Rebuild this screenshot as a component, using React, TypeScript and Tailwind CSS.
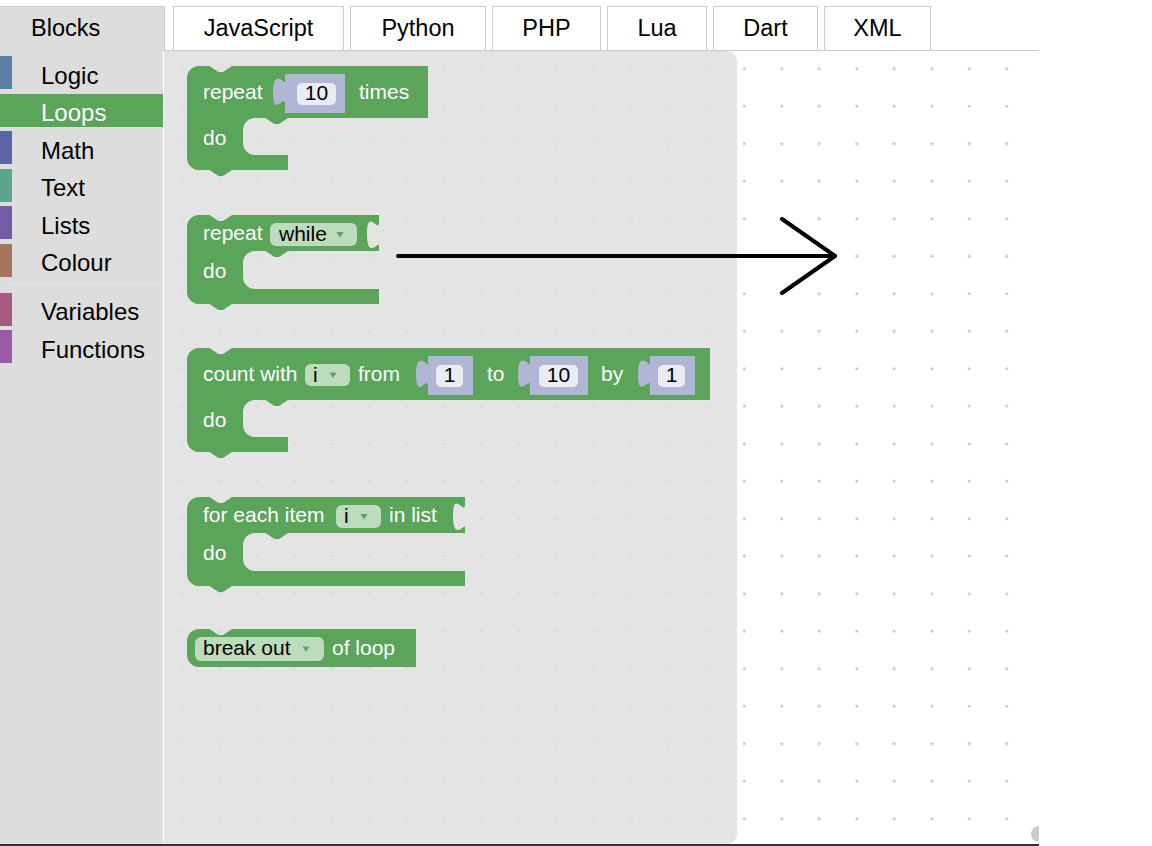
import React from 'react';

const FONT = "'Liberation Sans', Arial, sans-serif";
const GREEN = '#5ba55b';
const SHADOW = '#b1b6d4';
const FIELD = '#e9ebf5';
const DROP = '#bddbbd';

const tabs = [
  { label: 'JavaScript', cls: 'w-[171px]' },
  { label: 'Python', cls: 'w-[136px]' },
  { label: 'PHP', cls: 'w-[109px]' },
  { label: 'Lua', cls: 'w-[100px]' },
  { label: 'Dart', cls: 'w-[105px]' },
  { label: 'XML', cls: 'w-[107px]' },
];

const topCats = [
  { label: 'Logic', bar: 'bg-[#5b80a5]' },
  { label: 'Loops', bar: 'bg-[#5ba55b]', selected: true },
  { label: 'Math', bar: 'bg-[#5b67a5]' },
  { label: 'Text', bar: 'bg-[#5ba58c]' },
  { label: 'Lists', bar: 'bg-[#745ba5]' },
  { label: 'Colour', bar: 'bg-[#a5745b]' },
];

const bottomCats = [
  { label: 'Variables', bar: 'bg-[#a55b80]' },
  { label: 'Functions', bar: 'bg-[#995ba6]' },
];

type Cat = { label: string; bar: string; selected?: boolean };

function CategoryRow({ cat }: { cat: Cat }) {
  return (
    <div className={`flex h-[33px] items-center ${cat.selected ? 'bg-[#5ba55b] text-white' : 'text-black'}`}>
      <div className={`h-full w-[12px] ${cat.bar}`} />
      <span className="ml-[29px] mt-[6px] text-[24px] leading-none">{cat.label}</span>
    </div>
  );
}

// ---- block shapes (page coordinates) ----
const NOTCH_R = 'l9,6 4.5,0 9,-6';
const NOTCH_L = 'l-9,6 -4.5,0 -9,-6';
const TAB_DOWN = 'c0,11.25 -12,-15 -12,11.25 s12,7.5 12,11.25';
const TAB_UP = 'c0,-11.25 -12,15 -12,-11.25 s12,-7.5 12,-11.25';

type CShape = {
  L: number; T: number; R: number; rowB: number; inner: number;
  stmtB: number; B: number; armR: number; ext?: boolean;
};

function cPath(s: CShape) {
  let d = `M${s.L},${s.T + 12} a12,12 0 0 1 12,-12 H${s.L + 22.5} ${NOTCH_R} H${s.R}`;
  if (s.ext) d += ` V${s.T + 7.5} ${TAB_DOWN}`;
  d += ` V${s.rowB} H${s.inner + 45} ${NOTCH_L} H${s.inner + 12}`;
  d += ` a12,12 0 0 0 -12,12 V${s.stmtB - 12} a12,12 0 0 0 12,12 H${s.armR}`;
  d += ` V${s.B} H${s.L + 45} ${NOTCH_L} H${s.L + 12} a12,12 0 0 1 -12,-12 Z`;
  return d;
}

function Label({ x, y, children, fill = '#ffffff', anchor }: { x: number; y: number; children: React.ReactNode; fill?: string; anchor?: 'middle' }) {
  return (
    <text x={x} y={y} fill={fill} fontSize={21} fontFamily={FONT} textAnchor={anchor}>
      {children}
    </text>
  );
}

function NumShadow({ x0, x1, y0, y1, fx0, fx1, fy0, fy1, value, base }: {
  x0: number; x1: number; y0: number; y1: number; fx0: number; fx1: number; fy0: number; fy1: number; value: string; base: number;
}) {
  const d = `M${x0},${y0} H${x1} V${y1} H${x0} V${y0 + 30} ${TAB_UP} Z`;
  return (
    <g>
      <path d={d} fill={SHADOW} />
      <rect x={fx0} y={fy0} width={fx1 - fx0} height={fy1 - fy0} rx={5} fill={FIELD} />
      <Label x={(fx0 + fx1) / 2} y={base} fill="#000000" anchor="middle">{value}</Label>
    </g>
  );
}

function Dropdown({ x0, x1, y0, y1, label, tx, ax, base }: {
  x0: number; x1: number; y0: number; y1: number; label: string; tx: number; ax: number; base: number;
}) {
  const cy = (y0 + y1) / 2;
  return (
    <g>
      <rect x={x0} y={y0} width={x1 - x0} height={y1 - y0} rx={6} fill={DROP} />
      <Label x={tx} y={base} fill="#000000">{label}</Label>
      <polygon points={`${ax - 3.5},${cy - 2.5} ${ax + 3.5},${cy - 2.5} ${ax},${cy + 3}`} fill={GREEN} />
    </g>
  );
}

function FlyoutBlocks() {
  const b1: CShape = { L: 187, T: 66, R: 428, rowB: 118, inner: 243, stmtB: 155, B: 170, armR: 288 };
  const b2: CShape = { L: 187, T: 215, R: 379, rowB: 251, inner: 243, stmtB: 289, B: 304, armR: 379, ext: true };
  const b3: CShape = { L: 187, T: 348, R: 710, rowB: 400, inner: 243, stmtB: 437, B: 452, armR: 288 };
  const b4: CShape = { L: 187, T: 497, R: 465, rowB: 533, inner: 243, stmtB: 571, B: 586, armR: 465, ext: true };
  const b5 = `M187,641 a12,12 0 0 1 12,-12 H209.5 ${NOTCH_R} H416 V667 H199 a12,12 0 0 1 -12,-12 Z`;

  return (
    <svg width={573} height={793} className="block">
      <g transform="translate(-164,-51)">
        {/* repeat 10 times */}
        <path d={cPath(b1)} fill={GREEN} />
        <Label x={203} y={99}>repeat</Label>
        <NumShadow x0={285} x1={345} y0={74} y1={113} fx0={297} fx1={336} fy0={83} fy1={105} value="10" base={100} />
        <Label x={359} y={99}>times</Label>
        <Label x={203} y={145}>do</Label>

        {/* repeat while */}
        <path d={cPath(b2)} fill={GREEN} />
        <Label x={203} y={240}>repeat</Label>
        <Dropdown x0={270} x1={357} y0={223} y1={246} label="while" tx={279} ax={340} base={241} />
        <Label x={203} y={278}>do</Label>

        {/* count with */}
        <path d={cPath(b3)} fill={GREEN} />
        <Label x={203} y={381}>count with</Label>
        <Dropdown x0={305} x1={350} y0={364} y1={386} label="i" tx={313} ax={333} base={382} />
        <Label x={358} y={381}>from</Label>
        <NumShadow x0={428} x1={473} y0={356} y1={395} fx0={436} fx1={463} fy0={365} fy1={387} value="1" base={382} />
        <Label x={487} y={381}>to</Label>
        <NumShadow x0={530} x1={588} y0={356} y1={395} fx0={539} fx1={578} fy0={365} fy1={387} value="10" base={382} />
        <Label x={601} y={381}>by</Label>
        <NumShadow x0={650} x1={695} y0={356} y1={395} fx0={658} fx1={685} fy0={365} fy1={387} value="1" base={382} />
        <Label x={203} y={427}>do</Label>

        {/* for each item */}
        <path d={cPath(b4)} fill={GREEN} />
        <Label x={203} y={522}>for each item</Label>
        <Dropdown x0={336} x1={381} y0={505} y1={528} label="i" tx={344} ax={364} base={523} />
        <Label x={389} y={522}>in list</Label>
        <Label x={203} y={560}>do</Label>

        {/* break out of loop */}
        <path d={b5} fill={GREEN} />
        <Dropdown x0={195} x1={324} y0={637} y1={661} label="break out" tx={203} ax={306} base={655} />
        <Label x={332} y={655}>of loop</Label>
      </g>
    </svg>
  );
}

export default function App() {
  return (
    <div className="relative h-[846px] w-[1152px] overflow-hidden bg-white font-['Liberation_Sans',Arial,sans-serif] text-black">
      <div className="w-[1039px]">
        {/* tab bar */}
        <div className="flex h-[51px]">
          <div className="mt-[6px] flex h-[45px] w-[165px] items-center border-t border-r border-[#cccccc] bg-[#dddddd] pb-[1px] pl-[31px] text-[23.5px]">
            Blocks
          </div>
          <div className="flex flex-1 items-end gap-[6px] border-b border-[#cccccc] pl-[8px]">
            {tabs.map((t) => (
              <div
                key={t.label}
                className={`flex h-[44px] items-center justify-center border border-b-0 border-[#cccccc] bg-white pt-[1px] text-[23.5px] ${t.cls}`}
              >
                {t.label}
              </div>
            ))}
          </div>
        </div>

        {/* blockly area */}
        <div className="flex h-[793px]">
          <div className="flex w-[163px] flex-col bg-[#dddddd] pt-[5px]">
            <div className="flex flex-col gap-[4.5px]">
              {topCats.map((c) => (
                <CategoryRow key={c.label} cat={c} />
              ))}
            </div>
            <div className="my-[7.5px] ml-[8px] border-t border-[#e9e9e9]" />
            <div className="flex flex-col gap-[4.5px]">
              {bottomCats.map((c) => (
                <CategoryRow key={c.label} cat={c} />
              ))}
            </div>
          </div>

          <div className="relative flex-1 overflow-hidden bg-white bg-[radial-gradient(circle,#c4c4c4_1.3px,transparent_1.7px)] bg-[length:37.5px_37.5px] bg-[position:0px_-1px]">
            <div className="ml-[1px] h-full w-[573px] rounded-r-[10px] bg-[#dddddd]/80">
              <FlyoutBlocks />
            </div>
            <div className="absolute bottom-[2px] right-[-8px] h-[16px] w-[16px] rounded-full bg-[#cccccc]" />
          </div>
        </div>

        <div className="h-[2px] bg-[#333333]" />
      </div>

      {/* hand-drawn arrow */}
      <svg className="pointer-events-none absolute left-[390px] top-[210px]" width={455} height={90}>
        <g transform="translate(-390,-210)" stroke="#000000" strokeWidth={4} strokeLinecap="round" fill="none">
          <line x1={398} y1={256} x2={834} y2={256} />
          <line x1={782} y1={219} x2={835} y2={256} />
          <line x1={782} y1={293} x2={835} y2={256} />
        </g>
      </svg>
    </div>
  );
}
